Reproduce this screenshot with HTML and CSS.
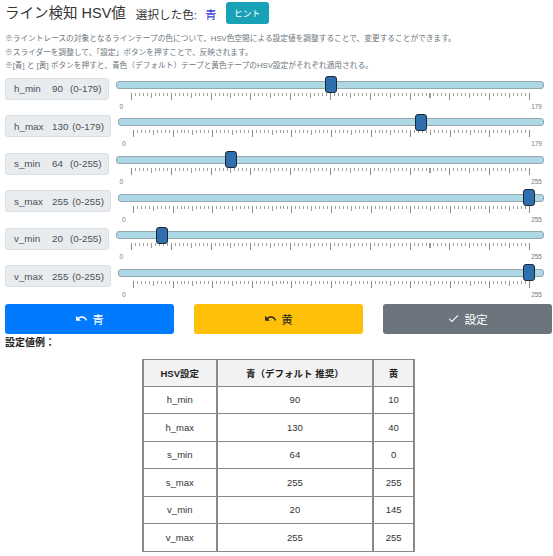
FILE: index.html
```html
<!DOCTYPE html>
<html lang="ja">
<head>
<meta charset="utf-8">
<title>ライン検知 HSV値</title>
<link rel="stylesheet" href="styles.css">
</head>
<body>
<div class="page">
  <div class="header">
    <h1 class="title">ライン検知 HSV値</h1>
    <span class="selected">選択した色:</span>
    <span class="selected-color">青</span>
    <button class="btn btn-hint">ヒント</button>
  </div>

  <div class="notes">
    <p>※ライントレースの対象となるラインテープの色について、HSV色空間による設定値を調整することで、変更することができます。</p>
    <p>※スライダーを調整して、「設定」ボタンを押すことで、反映されます。</p>
    <p>※[青] と [黄] ボタンを押すと、青色（デフォルト）テープと黄色テープのHSV設定がそれぞれ適用される。</p>
  </div>

  <div class="rows">
    <div class="row">
      <div class="label"><span class="name">h_min</span><span class="val">90</span><span class="range">(0-179)</span></div>
      <div class="slider">
        <div class="track"><div class="thumb" style="--p:0.5028"></div></div>
        <div class="ticks"></div>
        <div class="tick-labels"><span>0</span><span>179</span></div>
      </div>
    </div>
    <div class="row">
      <div class="label"><span class="name">h_max</span><span class="val">130</span><span class="range">(0-179)</span></div>
      <div class="slider">
        <div class="track"><div class="thumb" style="--p:0.7263"></div></div>
        <div class="ticks"></div>
        <div class="tick-labels"><span>0</span><span>179</span></div>
      </div>
    </div>
    <div class="row">
      <div class="label"><span class="name">s_min</span><span class="val">64</span><span class="range">(0-255)</span></div>
      <div class="slider">
        <div class="track"><div class="thumb" style="--p:0.251"></div></div>
        <div class="ticks"></div>
        <div class="tick-labels"><span>0</span><span>255</span></div>
      </div>
    </div>
    <div class="row">
      <div class="label"><span class="name">s_max</span><span class="val">255</span><span class="range">(0-255)</span></div>
      <div class="slider">
        <div class="track"><div class="thumb" style="--p:1"></div></div>
        <div class="ticks"></div>
        <div class="tick-labels"><span>0</span><span>255</span></div>
      </div>
    </div>
    <div class="row">
      <div class="label"><span class="name">v_min</span><span class="val">20</span><span class="range">(0-255)</span></div>
      <div class="slider">
        <div class="track"><div class="thumb" style="--p:0.0784"></div></div>
        <div class="ticks"></div>
        <div class="tick-labels"><span>0</span><span>255</span></div>
      </div>
    </div>
    <div class="row">
      <div class="label"><span class="name">v_max</span><span class="val">255</span><span class="range">(0-255)</span></div>
      <div class="slider">
        <div class="track"><div class="thumb" style="--p:1"></div></div>
        <div class="ticks"></div>
        <div class="tick-labels"><span>0</span><span>255</span></div>
      </div>
    </div>
  </div>

  <div class="actions">
    <button class="btn btn-blue">
      <svg class="icon" viewBox="0 0 24 24"><path d="M12.5 8c-2.65 0-5.05.99-6.9 2.6L2 7v9h9l-3.62-3.62c1.39-1.16 3.16-1.88 5.12-1.88 3.54 0 6.55 2.31 7.6 5.5l2.37-.78C21.08 11.03 17.15 8 12.5 8z"/></svg>
      <span>青</span>
    </button>
    <button class="btn btn-yellow">
      <svg class="icon" viewBox="0 0 24 24"><path d="M12.5 8c-2.65 0-5.05.99-6.9 2.6L2 7v9h9l-3.62-3.62c1.39-1.16 3.16-1.88 5.12-1.88 3.54 0 6.55 2.31 7.6 5.5l2.37-.78C21.08 11.03 17.15 8 12.5 8z"/></svg>
      <span>黄</span>
    </button>
    <button class="btn btn-gray">
      <svg class="icon" viewBox="0 0 24 24"><path d="M9 16.2L4.8 12l-1.4 1.4L9 19 21 7l-1.4-1.4L9 16.2z"/></svg>
      <span>設定</span>
    </button>
  </div>

  <div class="example-title">設定値例：</div>

  <table class="example">
    <colgroup><col class="c1"><col class="c2"><col class="c3"></colgroup>
    <thead>
      <tr><th>HSV設定</th><th>青（デフォルト 推奨）</th><th>黄</th></tr>
    </thead>
    <tbody>
      <tr><td>h_min</td><td>90</td><td>10</td></tr>
      <tr><td>h_max</td><td>130</td><td>40</td></tr>
      <tr><td>s_min</td><td>64</td><td>0</td></tr>
      <tr><td>s_max</td><td>255</td><td>255</td></tr>
      <tr><td>v_min</td><td>20</td><td>145</td></tr>
      <tr><td>v_max</td><td>255</td><td>255</td></tr>
    </tbody>
  </table>
</div>
</body>
</html>
```
FILE: styles.css
```css
* { box-sizing: border-box; }

body {
  margin: 0;
  background: #fff;
  font-family: "Liberation Sans", "Noto Sans CJK JP", sans-serif;
  color: #333;
}

.page {
  padding: 2px 1px 0 5px;
}

/* header */
.header {
  display: flex;
  align-items: center;
  height: 22px;
}

.title {
  margin: 0 10px 0 0;
  font-size: 14.5px;
  font-weight: normal;
  color: #333;
  line-height: 22px;
}

.selected {
  font-size: 11.6px;
  color: #333;
  margin-top: 2px;
}

.selected-color {
  font-size: 11.6px;
  color: #3b3bd6;
  margin: 2px 9px 0 8px;
}

.btn {
  border: none;
  font-family: inherit;
  cursor: pointer;
  border-radius: 3px;
  padding: 0;
}

.btn-hint {
  width: 43px;
  height: 22px;
  background: #17a2b8;
  color: #fff;
  font-size: 8.8px;
}

/* notes */
.notes {
  margin-top: 8px;
  color: #6c757d;
  font-size: 7.7px;
  line-height: 13.5px;
}

.notes p {
  margin: 0;
  white-space: nowrap;
}

/* slider rows */
.rows {
  margin-top: 5px;
}

.row {
  display: flex;
  align-items: flex-start;
  height: 37.6px;
}

.label {
  flex: none;
  display: flex;
  align-items: center;
  height: 22px;
  padding: 0 6px 0 8px;
  background: #e9ecef;
  border: 1px solid #dadfe4;
  border-radius: 3px;
  font-size: 9.8px;
  color: #495057;
  white-space: nowrap;
}

.label .name {
  width: 38px;
}

.label .val {
  min-width: 14px;
  margin-right: 4px;
}

.slider {
  flex: 1;
  margin: 0 8px 0 7px;
  padding-top: 3.3px;
}

.track {
  position: relative;
  height: 8px;
  background: #add8e6;
  border: 1px solid #93a7ae;
  border-radius: 3px;
}

.thumb {
  position: absolute;
  top: -5.5px;
  left: calc(14px + var(--p) * (100% - 28px) - 6px);
  width: 12px;
  height: 17px;
  background: #2f6fae;
  border: 1px solid #1c2733;
  border-radius: 3px;
}

.ticks {
  margin: 4px 14px 0 15px;
  height: 8px;
  background:
    repeating-linear-gradient(90deg, #8c8c8c 0 1px, transparent 1px 10%) 0 0 / calc(100% - 1px) 7px repeat-x,
    repeating-linear-gradient(90deg, #9a9a9a 0 1px, transparent 1px 5%) 0 0 / calc(100% - 1px) 5px repeat-x,
    repeating-linear-gradient(90deg, #a0a0a0 0 1px, transparent 1px 1%) 0 0 / calc(100% - 1px) 3px repeat-x;
}

.tick-labels {
  display: flex;
  justify-content: space-between;
  margin-top: 2px;
  padding: 0 2px 0 4px;
  font-size: 6.5px;
  line-height: 8px;
  color: #7a7a7a;
}

/* buttons */
.actions {
  display: grid;
  grid-template-columns: 1fr 1fr 1fr;
  column-gap: 20px;
  margin-top: 0.6px;
}

.actions .btn {
  height: 30px;
  display: flex;
  align-items: center;
  justify-content: center;
  gap: 4px;
  font-size: 11.6px;
}

.icon {
  width: 13px;
  height: 13px;
  fill: currentColor;
}

.btn-blue { background: #007bff; color: #fff; }
.btn-yellow { background: #ffc107; color: #212529; }
.btn-gray { background: #6c757d; color: #fff; }

/* example */
.example-title {
  margin-top: 2px;
  font-size: 10px;
  font-weight: bold;
  line-height: 13px;
  color: #222;
}

.example {
  margin: 10px auto 0;
  border-collapse: collapse;
  width: 273px;
  font-size: 9.5px;
  color: #333;
}

.example col.c1 { width: 74px; }
.example col.c2 { width: 158px; }
.example col.c3 { width: 41px; }

.example th,
.example td {
  text-align: center;
  padding: 0;
  border-top: 1px solid #8a8a8a;
  border-bottom: 1px solid #8a8a8a;
  border-left: 2px solid #8a8a8a;
  border-right: 2px solid #8a8a8a;
}

.example th {
  height: 27px;
  background: #f2f2f2;
  font-weight: bold;
  color: #222;
}

.example td {
  height: 27.5px;
}
```
